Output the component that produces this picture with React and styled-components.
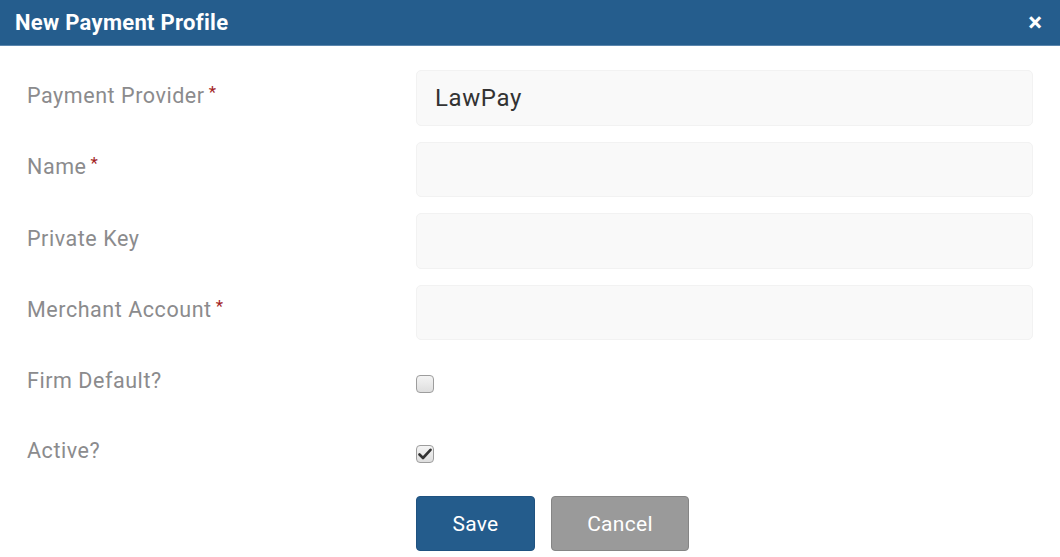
import React from 'react'
import styled, { createGlobalStyle } from 'styled-components'

const Global = createGlobalStyle`
  html, body { margin: 0; padding: 0; background: #fff; }
  body { font-family: Roboto, "Liberation Sans", sans-serif; }
`

const Dialog = styled.div`
  width: 1060px;
  height: 557px;
  background: #fff;
  overflow: hidden;
`

const Header = styled.div`
  height: 45px;
  background: #255d8d;
  border-bottom: 1px solid #5b86ad;
  display: flex;
  align-items: center;
  justify-content: space-between;
  padding: 0 18px 0 15px;
  color: #fff;
`

const Title = styled.h1`
  margin: 0;
  font-size: 22px;
  letter-spacing: 0.3px;
  font-weight: 700;
`

const Close = styled.span`
  font-size: 26px;
  font-weight: 700;
  line-height: 1;
  margin-top: -2px;
`

const Body = styled.form`
  padding: 24px 27px 0 27px;
  display: flex;
  flex-direction: column;
`

const Row = styled.div`
  display: grid;
  grid-template-columns: 389px 1fr;
  align-items: center;
  height: ${p => p.$h || '55.5px'};
  margin-bottom: ${p => p.$gap || '16px'};
`

const Label = styled.label`
  font-size: 21.5px;
  letter-spacing: 0.55px;
  color: #8b8b8d;
  padding-bottom: 5px;
  display: flex;
  align-items: flex-start;
`

const Req = styled.span`
  color: #a31f1f;
  font-size: 17px;
  margin-left: 4px;
  line-height: 1;
  margin-top: 1px;
`

const Field = styled.div`
  height: 100%;
  box-sizing: border-box;
  background: #f9f9f9;
  border: 1px solid #f2f2f2;
  border-radius: 5px;
  display: flex;
  align-items: center;
  padding-left: 18px;
  font-size: 24px;
  letter-spacing: 0.6px;
  color: #333;
`

const Box = styled.span`
  width: 18px;
  height: 18px;
  box-sizing: border-box;
  border: 1px solid #9d9d9d;
  border-radius: 4px;
  background: linear-gradient(#f4f4f4, #dedede);
  display: flex;
  align-items: center;
  justify-content: center;
  margin-top: 2px;
`

const Actions = styled.div`
  display: flex;
  gap: 16px;
  padding-left: 389px;
`

const Button = styled.button`
  height: 55px;
  width: ${p => p.$w};
  border-radius: 4px;
  font-family: Roboto, "Liberation Sans", sans-serif;
  font-size: 21px;
  letter-spacing: 0.3px;
  color: #fff;
  background: ${p => (p.$primary ? '#245c8c' : '#9a9a9a')};
  border: 1px solid ${p => (p.$primary ? '#1f5280' : '#858585')};
  padding: 0;
`

const Check = ({ on }) => (
  <Box>
    {on && (
      <svg width="14" height="12" viewBox="0 0 14 12">
        <path d="M1.5 6.5 L5 10 L12.5 1.8" fill="none" stroke="#333" strokeWidth="2.6" strokeLinecap="round" strokeLinejoin="round" />
      </svg>
    )}
  </Box>
)

const fields = [
  { label: 'Payment Provider', req: true, value: 'LawPay' },
  { label: 'Name', req: true },
  { label: 'Private Key' },
  { label: 'Merchant Account', req: true },
]

export default function App() {
  return (
    <Dialog>
      <Global />
      <Header>
        <Title>New Payment Profile</Title>
        <Close>×</Close>
      </Header>
      <Body>
        {fields.map(f => (
          <Row key={f.label}>
            <Label>
              {f.label}
              {f.req && <Req>*</Req>}
            </Label>
            <Field>{f.value}</Field>
          </Row>
        ))}
        <Row $h="54px">
          <Label>Firm Default?</Label>
          <Check />
        </Row>
        <Row $h="54px" $gap="16px">
          <Label>Active?</Label>
          <Check on />
        </Row>
        <Actions>
          <Button type="button" $primary $w="119px">Save</Button>
          <Button type="button" $w="138px">Cancel</Button>
        </Actions>
      </Body>
    </Dialog>
  )
}
